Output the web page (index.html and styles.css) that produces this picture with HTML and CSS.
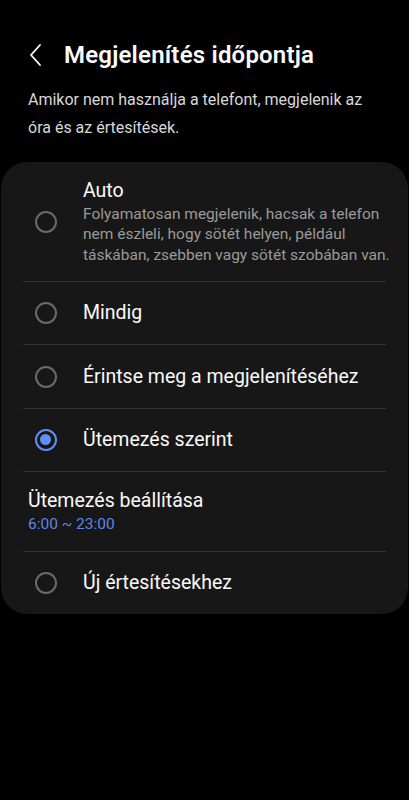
FILE: index.html
```html
<!DOCTYPE html>
<html lang="hu">
<head>
	<meta charset="UTF-8">
	<title>Megjelenítés időpontja</title>
	<link rel="stylesheet" href="styles.css">
</head>
<body>
<div class="topbar">
	<svg class="back" width="14" height="24" viewBox="0 0 14 24">
		<path d="M11 2 L2 12 L11 22" fill="none" stroke="#fff" stroke-width="1.8" stroke-linecap="round" stroke-linejoin="round"/>
	</svg>
	<h1>Megjelenítés időpontja</h1>
</div>
<p class="intro">Amikor nem használja a telefont, megjelenik az óra és az értesítések.</p>
<div class="card">
	<div class="option tall">
		<span class="radio"></span>
		<div class="text">
			<div class="label">Auto</div>
			<div class="sub">Folyamatosan megjelenik, hacsak a telefon nem észleli, hogy sötét helyen, például táskában, zsebben vagy sötét szobában van.</div>
		</div>
	</div>
	<div class="divider"></div>
	<div class="option">
		<span class="radio"></span>
		<div class="label">Mindig</div>
	</div>
	<div class="divider"></div>
	<div class="option">
		<span class="radio"></span>
		<div class="label">Érintse meg a megjelenítéséhez</div>
	</div>
	<div class="divider"></div>
	<div class="option">
		<span class="radio on"></span>
		<div class="label">Ütemezés szerint</div>
	</div>
	<div class="divider"></div>
	<div class="setting">
		<div class="label">Ütemezés beállítása</div>
		<div class="value">6:00 ~ 23:00</div>
	</div>
	<div class="divider"></div>
	<div class="option">
		<span class="radio"></span>
		<div class="label">Új értesítésekhez</div>
	</div>
</div>
</body>
</html>
```

FILE: styles.css
```css
*{
	box-sizing: border-box;
}
body{
	margin: 0;
	background: #000;
	color: #fafafa;
	font-family: Roboto, "Noto Sans", sans-serif;
}
.topbar{
	display: flex;
	align-items: center;
	height: 56px;
	margin-top: 27px;
	padding-left: 29px;
}
.topbar .back{
	margin-right: 21px;
}
h1{
	margin: 0;
	font-size: 24px;
	font-weight: 600;
	letter-spacing: 0.2px;
}
.intro{
	margin: 0;
	padding: 0 28px;
	margin-top: 3px;
	font-size: 16px;
	line-height: 28px;
	color: #d8d8d8;
}
.card{
	margin: 20px 1px 0;
	background: #171717;
	border-radius: 26px;
}
.option{
	display: flex;
	align-items: center;
	min-height: 62.4px;
	padding-left: 34px;
}
.option.tall{
	min-height: 119px;
	padding-top: 1px;
}
.option:last-child{
	min-height: 62px;
}
.radio{
	width: 22px;
	height: 22px;
	border: 2px solid #6a6a6a;
	border-radius: 50%;
	flex: none;
	margin-right: 26px;
	position: relative;
}
.radio.on{
	border-color: #5f8ff5;
	border-width: 2.5px;
}
.radio.on::after{
	content: "";
	position: absolute;
	left: 3px;
	top: 3px;
	width: 11px;
	height: 11px;
	border-radius: 50%;
	background: #5f8ff5;
}
.label{
	font-size: 19.5px;
	line-height: 24px;
}
.sub{
	font-size: 15.5px;
	line-height: 20.5px;
	color: #9a9a9a;
	margin-top: 1px;
	padding-right: 6px;
}
.setting{
	padding: 17px 27px 13px;
	min-height: 79px;
}
.value{
	font-size: 15.5px;
	line-height: 22px;
	color: #5a87e6;
}
.divider{
	height: 1px;
	background: #333;
	margin: 0 22px 0 22px;
}
```
